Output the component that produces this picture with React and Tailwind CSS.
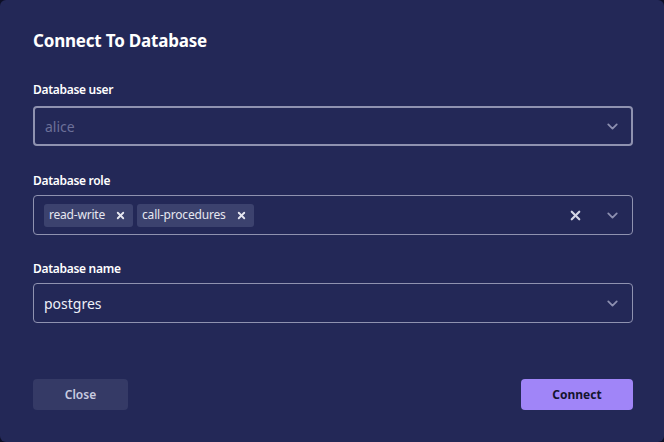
import { FiChevronDown, FiX } from "react-icons/fi";

const font = { fontFamily: '"Noto Sans", "Open Sans", sans-serif' };

const Chip = ({ label }) => (
  <span className="flex items-center gap-[10px] h-[23px] pl-[5px] pr-[7px] bg-[#3c426e] rounded-[3px] text-[12px] tracking-[-0.2px] text-[#e6e7f0]">
    {label}
    <FiX className="text-[11px] text-[#e6e7f0]" strokeWidth={4} />
  </span>
);

const Chevron = () => (
  <FiChevronDown className="text-[17px] text-[#8d90b0]" strokeWidth={2.5} />
);

export default function App() {
  return (
    <div className="w-[664px] h-[442px] bg-[#0d0f26]" style={font}>
      <div className="w-full h-full bg-[#232857] rounded-[6px] pl-[33px] pr-[31px] pt-[30px] flex flex-col">
        <h1 className="text-[17px] leading-[22px] font-bold tracking-[-0.2px] text-white">
          Connect To Database
        </h1>

        {/* Database user */}
        <label className="mt-[30px] mb-[8px] text-[12px] leading-[16px] font-semibold tracking-[-0.3px] text-white">
          Database user
        </label>
        <div className="h-[40px] flex items-center justify-between pl-[10px] pr-[10px] border-2 border-[#8f92b0] rounded-[4px]">
          <span className="text-[14px] text-[#6c7099]">alice</span>
          <Chevron />
        </div>

        {/* Database role */}
        <label className="mt-[27px] mb-[6px] text-[12px] leading-[16px] font-semibold tracking-[-0.3px] text-white">
          Database role
        </label>
        <div className="h-[40px] flex items-center justify-between pl-[10px] pr-[11px] border border-[#8f92b0] rounded-[4px]">
          <div className="flex items-center gap-[4px]">
            <Chip label="read-write" />
            <Chip label="call-procedures" />
          </div>
          <div className="flex items-center gap-[21px]">
            <FiX className="text-[15px] text-[#d4d5e4]" strokeWidth={3.5} />
            <Chevron />
          </div>
        </div>

        {/* Database name */}
        <label className="mt-[26px] mb-[6px] text-[12px] leading-[16px] font-semibold tracking-[-0.3px] text-white">
          Database name
        </label>
        <div className="h-[40px] flex items-center justify-between pl-[10px] pr-[11px] border border-[#8f92b0] rounded-[4px]">
          <span className="text-[14px] text-[#eef0f8]">postgres</span>
          <Chevron />
        </div>

        <div className="mt-[56px] flex items-center justify-between">
          <button className="w-[95px] h-[31px] rounded-[4px] bg-[#353a66] text-[12px] font-semibold text-[#c9cbe0]">
            Close
          </button>
          <button className="w-[112px] h-[31px] rounded-[4px] bg-[#a085f8] text-[12px] font-bold text-[#14142e]">
            Connect
          </button>
        </div>
      </div>
    </div>
  );
}
